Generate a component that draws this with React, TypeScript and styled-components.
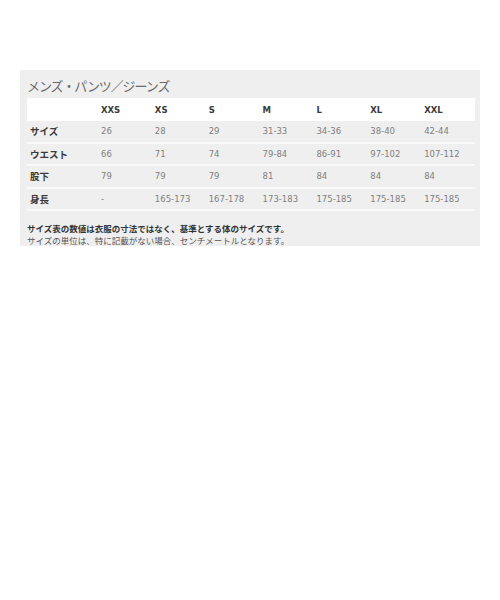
import styled, { createGlobalStyle } from 'styled-components';

const GlobalStyle = createGlobalStyle`
  html, body {
    margin: 0;
    padding: 0;
    background: #ffffff;
  }
  body {
    font-family: "DejaVu Sans", "Noto Sans CJK JP", sans-serif;
  }
`;

const sizes = ['XXS', 'XS', 'S', 'M', 'L', 'XL', 'XXL'];

const rows: { label: string; values: string[] }[] = [
  { label: 'サイズ', values: ['26', '28', '29', '31-33', '34-36', '38-40', '42-44'] },
  { label: 'ウエスト', values: ['66', '71', '74', '79-84', '86-91', '97-102', '107-112'] },
  { label: '股下', values: ['79', '79', '79', '81', '84', '84', '84'] },
  { label: '身長', values: ['-', '165-173', '167-178', '173-183', '175-185', '175-185', '175-185'] },
];

export default function App() {
  return (
    <>
      <GlobalStyle />
      <Page>
        <Panel>
          <Title>メンズ・パンツ／ジーンズ</Title>
          <Table>
            <HeaderRow>
              <LabelCell />
              {sizes.map((s) => (
                <HeadCell key={s}>{s}</HeadCell>
              ))}
            </HeaderRow>
            {rows.map((r) => (
              <Row key={r.label}>
                <LabelCell>{r.label}</LabelCell>
                {r.values.map((v, i) => (
                  <Cell key={i}>{v}</Cell>
                ))}
              </Row>
            ))}
          </Table>
          <Notes>
            <NoteStrong>サイズ表の数値は衣服の寸法ではなく、基準とする体のサイズです。</NoteStrong>
            <Note>サイズの単位は、特に記載がない場合、センチメートルとなります。</Note>
          </Notes>
        </Panel>
      </Page>
    </>
  );
}

const Page = styled.div`
  width: 500px;
  height: 600px;
  padding-top: 70px;
  padding-left: 20px;
  box-sizing: border-box;
`;

const Panel = styled.div`
  width: 460px;
  height: 176px;
  background: #efefef;
  padding: 0 5px 0 7px;
  box-sizing: border-box;
  display: flex;
  flex-direction: column;
`;

const Title = styled.div`
  height: 29px;
  display: flex;
  align-items: center;
  padding-top: 3px;
  box-sizing: border-box;
  font-family: "Noto Sans CJK JP", sans-serif;
  font-size: 13px;
  letter-spacing: -1.1px;
  color: #6a6a6a;
`;

const Table = styled.div`
  display: flex;
  flex-direction: column;
  width: 448px;
`;

const Row = styled.div`
  display: grid;
  grid-template-columns: 71px repeat(7, 1fr);
  align-items: center;
  height: 22.5px;
  box-sizing: border-box;
  border-bottom: 2px solid #fafafa;
`;

const HeaderRow = styled(Row)`
  height: 23px;
  background: #ffffff;
  border-bottom: none;
`;

const Cell = styled.div`
  padding-left: 3px;
  font-size: 8.5px;
  color: #808080;
  white-space: nowrap;
`;

const HeadCell = styled(Cell)`
  font-weight: bold;
  color: #3a3a3a;
`;

const LabelCell = styled.div`
  padding-left: 3px;
  font-family: "Noto Sans CJK JP", sans-serif;
  font-size: 9.5px;
  font-weight: bold;
  color: #3a3a3a;
  white-space: nowrap;
`;

const Notes = styled.div`
  padding-top: 11px;
  display: flex;
  flex-direction: column;
  font-family: "Noto Sans CJK JP", sans-serif;
  font-size: 8.5px;
  line-height: 12px;
  white-space: nowrap;
`;

const NoteStrong = styled.div`
  font-weight: bold;
  color: #333333;
`;

const Note = styled.div`
  color: #555555;
`;
